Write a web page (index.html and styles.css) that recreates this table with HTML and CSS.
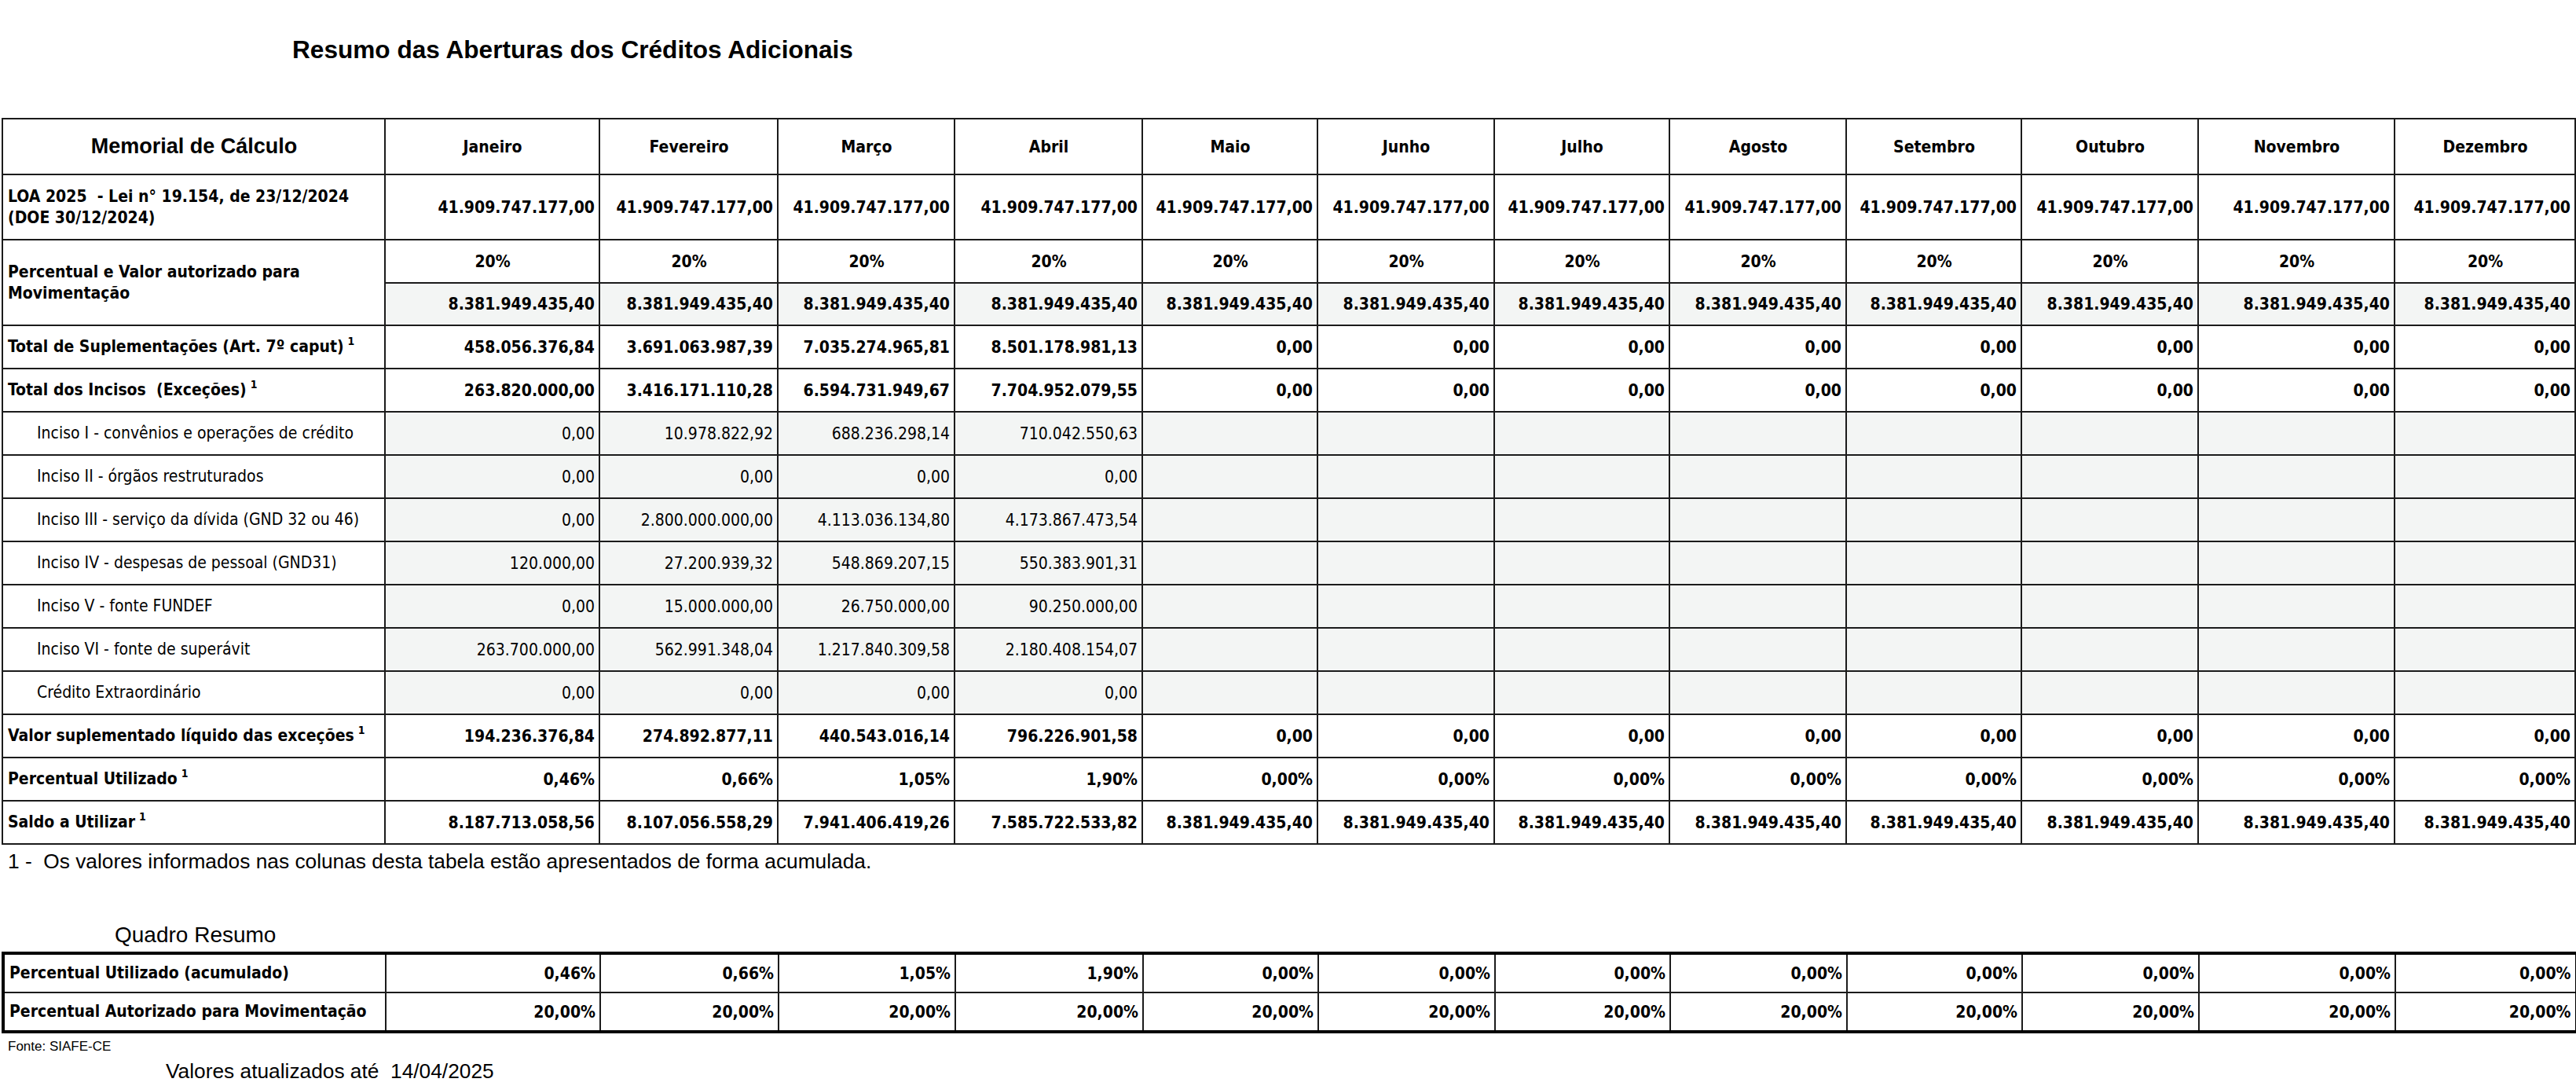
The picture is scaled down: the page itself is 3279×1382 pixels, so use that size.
FILE: index.html
```html
<!DOCTYPE html>
<html lang="pt-BR">
<head>
<meta charset="utf-8">
<title>Resumo das Aberturas dos Créditos Adicionais</title>
<link rel="stylesheet" href="styles.css">
</head>
<body>
<h1 class="title">Resumo das Aberturas dos Créditos Adicionais</h1>

<table class="grid main">
  <colgroup>
    <col class="c-label"><col class="c-jan"><col class="c-fev"><col class="c-mar"><col class="c-abr"><col class="c-mai"><col class="c-jun"><col class="c-jul"><col class="c-ago"><col class="c-set"><col class="c-out"><col class="c-nov"><col class="c-dez">
  </colgroup>
  <thead>
    <tr class="r-head">
      <th class="memorial">Memorial de Cálculo</th>
      <th>Janeiro</th><th>Fevereiro</th><th>Março</th><th>Abril</th><th>Maio</th><th>Junho</th><th>Julho</th><th>Agosto</th><th>Setembro</th><th>Outubro</th><th>Novembro</th><th>Dezembro</th>
    </tr>
  </thead>
  <tbody>
    <tr class="r-loa">
      <td class="lbl b">LOA 2025&nbsp; - Lei n° 19.154, de 23/12/2024<br>(DOE 30/12/2024)</td>
      <td class="num b">41.909.747.177,00</td><td class="num b">41.909.747.177,00</td><td class="num b">41.909.747.177,00</td><td class="num b">41.909.747.177,00</td><td class="num b">41.909.747.177,00</td><td class="num b">41.909.747.177,00</td><td class="num b">41.909.747.177,00</td><td class="num b">41.909.747.177,00</td><td class="num b">41.909.747.177,00</td><td class="num b">41.909.747.177,00</td><td class="num b">41.909.747.177,00</td><td class="num b">41.909.747.177,00</td>
    </tr>
    <tr class="r-pct">
      <td class="lbl b" rowspan="2">Percentual e Valor autorizado para<br>Movimentação</td>
      <td class="ctr b">20%</td><td class="ctr b">20%</td><td class="ctr b">20%</td><td class="ctr b">20%</td><td class="ctr b">20%</td><td class="ctr b">20%</td><td class="ctr b">20%</td><td class="ctr b">20%</td><td class="ctr b">20%</td><td class="ctr b">20%</td><td class="ctr b">20%</td><td class="ctr b">20%</td>
    </tr>
    <tr class="r-val">
      <td class="num b gray">8.381.949.435,40</td><td class="num b gray">8.381.949.435,40</td><td class="num b gray">8.381.949.435,40</td><td class="num b gray">8.381.949.435,40</td><td class="num b gray">8.381.949.435,40</td><td class="num b gray">8.381.949.435,40</td><td class="num b gray">8.381.949.435,40</td><td class="num b gray">8.381.949.435,40</td><td class="num b gray">8.381.949.435,40</td><td class="num b gray">8.381.949.435,40</td><td class="num b gray">8.381.949.435,40</td><td class="num b gray">8.381.949.435,40</td>
    </tr>
    <tr class="r">
      <td class="lbl b">Total de Suplementações (Art. 7º caput)<sup class="fn">1</sup></td>
      <td class="num b">458.056.376,84</td><td class="num b">3.691.063.987,39</td><td class="num b">7.035.274.965,81</td><td class="num b">8.501.178.981,13</td><td class="num b">0,00</td><td class="num b">0,00</td><td class="num b">0,00</td><td class="num b">0,00</td><td class="num b">0,00</td><td class="num b">0,00</td><td class="num b">0,00</td><td class="num b">0,00</td>
    </tr>
    <tr class="r">
      <td class="lbl b">Total dos Incisos&nbsp; (Exceções)<sup class="fn">1</sup></td>
      <td class="num b">263.820.000,00</td><td class="num b">3.416.171.110,28</td><td class="num b">6.594.731.949,67</td><td class="num b">7.704.952.079,55</td><td class="num b">0,00</td><td class="num b">0,00</td><td class="num b">0,00</td><td class="num b">0,00</td><td class="num b">0,00</td><td class="num b">0,00</td><td class="num b">0,00</td><td class="num b">0,00</td>
    </tr>
    <tr class="r">
      <td class="lbl sub">Inciso I - convênios e operações de crédito</td>
      <td class="num gray">0,00</td><td class="num gray">10.978.822,92</td><td class="num gray">688.236.298,14</td><td class="num gray">710.042.550,63</td><td class="gray"></td><td class="gray"></td><td class="gray"></td><td class="gray"></td><td class="gray"></td><td class="gray"></td><td class="gray"></td><td class="gray"></td>
    </tr>
    <tr class="r">
      <td class="lbl sub">Inciso II - órgãos restruturados</td>
      <td class="num gray">0,00</td><td class="num gray">0,00</td><td class="num gray">0,00</td><td class="num gray">0,00</td><td class="gray"></td><td class="gray"></td><td class="gray"></td><td class="gray"></td><td class="gray"></td><td class="gray"></td><td class="gray"></td><td class="gray"></td>
    </tr>
    <tr class="r">
      <td class="lbl sub">Inciso III - serviço da dívida (GND 32 ou 46)</td>
      <td class="num gray">0,00</td><td class="num gray">2.800.000.000,00</td><td class="num gray">4.113.036.134,80</td><td class="num gray">4.173.867.473,54</td><td class="gray"></td><td class="gray"></td><td class="gray"></td><td class="gray"></td><td class="gray"></td><td class="gray"></td><td class="gray"></td><td class="gray"></td>
    </tr>
    <tr class="r">
      <td class="lbl sub">Inciso IV - despesas de pessoal (GND31)</td>
      <td class="num gray">120.000,00</td><td class="num gray">27.200.939,32</td><td class="num gray">548.869.207,15</td><td class="num gray">550.383.901,31</td><td class="gray"></td><td class="gray"></td><td class="gray"></td><td class="gray"></td><td class="gray"></td><td class="gray"></td><td class="gray"></td><td class="gray"></td>
    </tr>
    <tr class="r">
      <td class="lbl sub">Inciso V - fonte FUNDEF</td>
      <td class="num gray">0,00</td><td class="num gray">15.000.000,00</td><td class="num gray">26.750.000,00</td><td class="num gray">90.250.000,00</td><td class="gray"></td><td class="gray"></td><td class="gray"></td><td class="gray"></td><td class="gray"></td><td class="gray"></td><td class="gray"></td><td class="gray"></td>
    </tr>
    <tr class="r">
      <td class="lbl sub">Inciso VI - fonte de superávit</td>
      <td class="num gray">263.700.000,00</td><td class="num gray">562.991.348,04</td><td class="num gray">1.217.840.309,58</td><td class="num gray">2.180.408.154,07</td><td class="gray"></td><td class="gray"></td><td class="gray"></td><td class="gray"></td><td class="gray"></td><td class="gray"></td><td class="gray"></td><td class="gray"></td>
    </tr>
    <tr class="r">
      <td class="lbl sub">Crédito Extraordinário</td>
      <td class="num gray">0,00</td><td class="num gray">0,00</td><td class="num gray">0,00</td><td class="num gray">0,00</td><td class="gray"></td><td class="gray"></td><td class="gray"></td><td class="gray"></td><td class="gray"></td><td class="gray"></td><td class="gray"></td><td class="gray"></td>
    </tr>
    <tr class="r">
      <td class="lbl b">Valor suplementado líquido das exceções<sup class="fn">1</sup></td>
      <td class="num b">194.236.376,84</td><td class="num b">274.892.877,11</td><td class="num b">440.543.016,14</td><td class="num b">796.226.901,58</td><td class="num b">0,00</td><td class="num b">0,00</td><td class="num b">0,00</td><td class="num b">0,00</td><td class="num b">0,00</td><td class="num b">0,00</td><td class="num b">0,00</td><td class="num b">0,00</td>
    </tr>
    <tr class="r">
      <td class="lbl b">Percentual Utilizado<sup class="fn">1</sup></td>
      <td class="num b">0,46%</td><td class="num b">0,66%</td><td class="num b">1,05%</td><td class="num b">1,90%</td><td class="num b">0,00%</td><td class="num b">0,00%</td><td class="num b">0,00%</td><td class="num b">0,00%</td><td class="num b">0,00%</td><td class="num b">0,00%</td><td class="num b">0,00%</td><td class="num b">0,00%</td>
    </tr>
    <tr class="r">
      <td class="lbl b">Saldo a Utilizar<sup class="fn">1</sup></td>
      <td class="num b">8.187.713.058,56</td><td class="num b">8.107.056.558,29</td><td class="num b">7.941.406.419,26</td><td class="num b">7.585.722.533,82</td><td class="num b">8.381.949.435,40</td><td class="num b">8.381.949.435,40</td><td class="num b">8.381.949.435,40</td><td class="num b">8.381.949.435,40</td><td class="num b">8.381.949.435,40</td><td class="num b">8.381.949.435,40</td><td class="num b">8.381.949.435,40</td><td class="num b">8.381.949.435,40</td>
    </tr>
  </tbody>
</table>

<p class="footnote">1 -&nbsp; Os valores informados nas colunas desta tabela estão apresentados de forma acumulada.</p>

<h2 class="subtitle">Quadro Resumo</h2>

<table class="grid quadro">
  <colgroup>
    <col class="c-label"><col class="c-jan"><col class="c-fev"><col class="c-mar"><col class="c-abr"><col class="c-mai"><col class="c-jun"><col class="c-jul"><col class="c-ago"><col class="c-set"><col class="c-out"><col class="c-nov"><col class="c-dez">
  </colgroup>
  <tbody>
    <tr class="q">
      <td class="lbl b">Percentual Utilizado (acumulado)</td>
      <td class="num b">0,46%</td><td class="num b">0,66%</td><td class="num b">1,05%</td><td class="num b">1,90%</td><td class="num b">0,00%</td><td class="num b">0,00%</td><td class="num b">0,00%</td><td class="num b">0,00%</td><td class="num b">0,00%</td><td class="num b">0,00%</td><td class="num b">0,00%</td><td class="num b">0,00%</td>
    </tr>
    <tr class="q">
      <td class="lbl b">Percentual Autorizado para Movimentação</td>
      <td class="num b">20,00%</td><td class="num b">20,00%</td><td class="num b">20,00%</td><td class="num b">20,00%</td><td class="num b">20,00%</td><td class="num b">20,00%</td><td class="num b">20,00%</td><td class="num b">20,00%</td><td class="num b">20,00%</td><td class="num b">20,00%</td><td class="num b">20,00%</td><td class="num b">20,00%</td>
    </tr>
  </tbody>
</table>

<p class="source">Fonte: SIAFE-CE</p>
<p class="updated">Valores atualizados até&nbsp; 14/04/2025</p>
</body>
</html>
```

FILE: styles.css
```css
html, body {
  margin: 0;
  padding: 0;
  background: #ffffff;
  color: #000000;
}

body {
  width: 3279px;
  font-family: "Liberation Sans", Arial, sans-serif;
}

.title {
  margin: 43px 0 0 372px;
  font-family: "Liberation Sans", Arial, sans-serif;
  font-weight: bold;
  font-size: 31.6px;
  line-height: 40px;
}

.grid {
  border-collapse: collapse;
  table-layout: fixed;
  width: 3276px;
  margin-left: 2px;
  font-family: "DejaVu Sans Condensed", "DejaVu Sans", sans-serif;
  font-size: 21px;
  color: #000;
}

.main {
  margin-top: 67px;
}

.c-label { width: 487px; }
.c-jan { width: 273px; }
.c-fev { width: 227px; }
.c-mar { width: 225px; }
.c-abr { width: 239px; }
.c-mai { width: 223px; }
.c-jun { width: 225px; }
.c-jul { width: 223px; }
.c-ago { width: 225px; }
.c-set { width: 223px; }
.c-out { width: 225px; }
.c-nov { width: 250px; }
.c-dez { width: 230px; }

.grid th,
.grid td {
  border: 2px solid #1b1b1b;
  padding: 0 5px 0 6px;
  vertical-align: middle;
  white-space: nowrap;
  overflow: hidden;
}

.grid th {
  font-weight: bold;
  text-align: center;
}

.grid th.memorial {
  font-family: "Liberation Sans", Arial, sans-serif;
  font-size: 27px;
}

.r-head { height: 71px; }
.r-loa { height: 83px; }
.r-pct { height: 55px; }
.r-val { height: 54px; }
.r { height: 55px; }
.q { height: 50px; }

.lbl {
  text-align: left;
  line-height: 27px;
}

.lbl.sub {
  padding-left: 43px;
}

.b { font-weight: bold; }

.num { text-align: right; }
.ctr { text-align: center; }

.gray { background: #f3f5f4; }

.fn {
  font-size: 14px;
  line-height: 0;
  vertical-align: 9px;
  margin-left: 5px;
}

.footnote {
  margin: 6px 0 0 10px;
  font-size: 26.3px;
  line-height: 30px;
}

.subtitle {
  margin: 63px 0 0 146px;
  font-weight: normal;
  font-size: 28px;
  line-height: 32px;
}

.quadro {
  margin-top: 5px;
  border: 4px solid #000;
  border-right-width: 3px;
}

.source {
  margin: 7px 0 0 10px;
  font-size: 17px;
  line-height: 20px;
}

.updated {
  margin: 6px 0 0 211px;
  font-size: 26.3px;
  line-height: 30px;
}
```
